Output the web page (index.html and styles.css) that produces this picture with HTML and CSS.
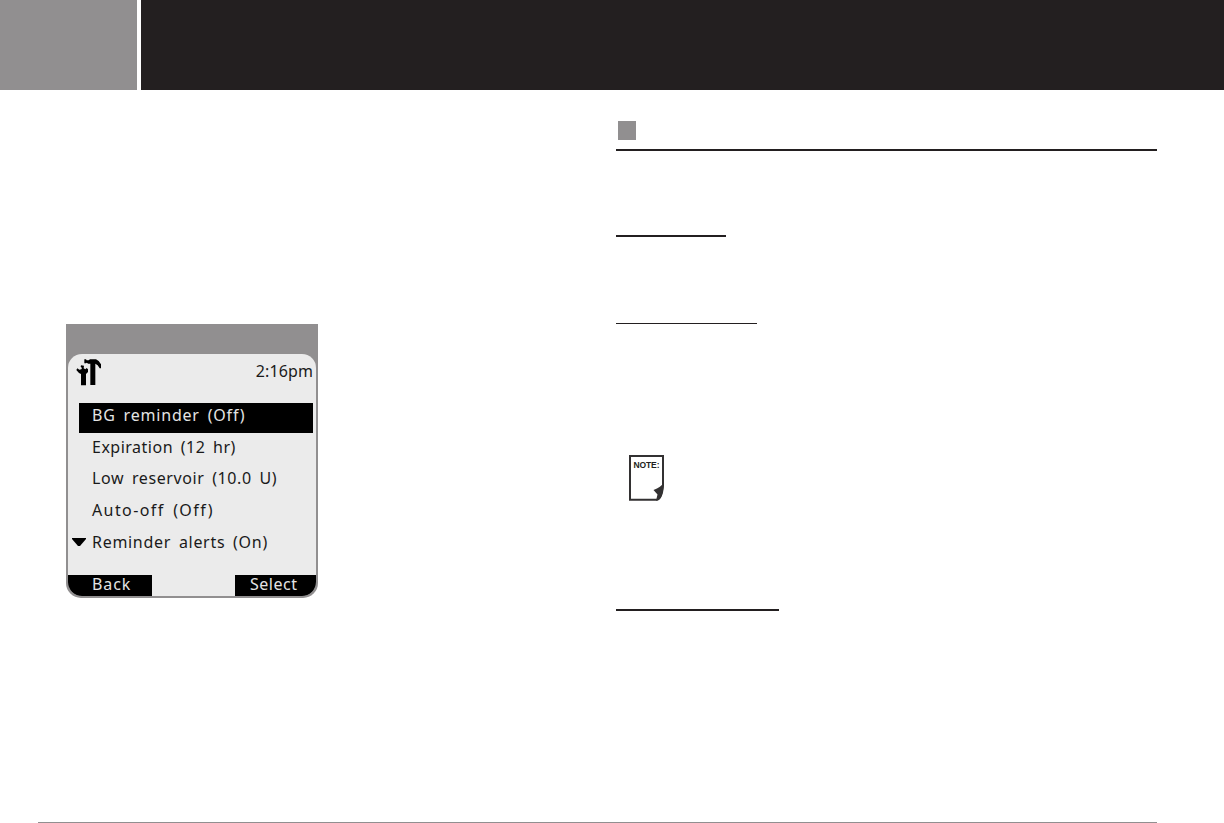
FILE: index.html
```html
<!DOCTYPE html>
<html lang="en">
  <head>
    <meta charset="UTF-8" />
    <meta name="viewport" content="width=device-width, initial-scale=1.0" />
    <title>Reminders</title>
    <link rel="stylesheet" href="styles.css">
  </head>
  <body>
    <header class="banner">
      <div class="banner-tab"></div>
      <div class="banner-title"></div>
    </header>

    <main class="page">
      <section class="left">
        <div class="device">
          <div class="screen">
            <div class="status">
              <svg class="tools" viewBox="48 123 78 81">
                <path d="M73 124h5l2 3h6l4-3h18l8 5 7 10v12h-4l-6-9-7-5v64H91v-64h-6l-5-3-2 2h-5z" />
                <path d="M63 142l9 1-1 8 5 3 4-4 4 4v8l-6 6v34H63v-34l-6-3-8-9 3-5 6 4 6-1 2-4-4-4z" />
              </svg>
              <span class="time">2:16pm</span>
            </div>
            <ul class="menu">
              <li class="selected"><span class="bg">BG reminder (Off)</span></li>
              <li><span class="expiration">Expiration (12 hr)</span></li>
              <li><span class="reservoir">Low reservoir (10.0 U)</span></li>
              <li><span class="auto">Auto-off (Off)</span></li>
              <li>
                <svg class="more" viewBox="0 0 14 8"><path d="M0 0h14v1L8 8H6L0 1z" /></svg>
                <span class="alerts">Reminder alerts (On)</span>
              </li>
            </ul>
            <div class="softkeys">
              <div class="key back">Back</div>
              <div class="key select">Select</div>
            </div>
          </div>
        </div>
      </section>

      <section class="right">
        <div class="heading"><div class="square"></div></div>
        <div class="rule first"></div>
        <div class="rule second"></div>
        <svg class="note" viewBox="0 0 36 46">
          <path class="sheet" d="M1 1H34V30Q33 44 28 44.7H1Z" />
          <path class="fold" d="M35 27.5Q34 45.5 27 45.7L28.5 39.5L24.5 35Q32 32 35 27.5Z" />
          <text x="4.5" y="12.7" textLength="26">NOTE:</text>
        </svg>
        <div class="rule third"></div>
      </section>
    </main>

    <footer></footer>
  </body>
</html>
```

FILE: styles.css
```css
* {
  box-sizing: border-box;
}
body {
  margin: 0;
  height: 823px;
  display: flex;
  flex-direction: column;
  overflow: hidden;
  background: #fff;
  font-family: "Noto Sans", sans-serif;
}
.banner {
  display: flex;
  gap: 4px;
  height: 90px;
}
.banner-tab {
  width: 137px;
  background: #918f90;
}
.banner-title {
  flex: 1;
  background: #231f20;
}
.page {
  flex: 1;
  display: grid;
  grid-template-columns: 550px 541px;
  padding-left: 66px;
}
.left {
  padding-top: 234px;
}
.device {
  width: 252px;
  height: 274px;
  padding: 30px 2px 2px;
  background: #918f90;
  border-radius: 0 0 15px 15px;
}
.screen {
  display: flex;
  flex-direction: column;
  height: 242px;
  background: #ebebeb;
  border-radius: 14px;
  overflow: hidden;
  font-size: 16px;
  color: #1a1a1a;
}
.status {
  display: flex;
  justify-content: space-between;
  height: 49px;
  padding: 5px 3px 0 8px;
}
.tools {
  width: 26px;
  height: 27px;
  fill: #000;
}
.time {
  line-height: 25px;
  letter-spacing: 0.1px;
}
.menu {
  list-style: none;
  margin: 0;
  padding: 0 3px 0 11px;
}
.menu li {
  position: relative;
  height: 31.7px;
  padding-left: 13px;
  line-height: 24px;
  white-space: nowrap;
}
.menu .selected {
  height: 30px;
  margin-bottom: 1.7px;
  background: #000;
  color: #e4e4e4;
}
.menu span {
  word-spacing: 3px;
}
.bg {
  letter-spacing: 0.8px;
}
.expiration {
  letter-spacing: 0.5px;
}
.reservoir {
  letter-spacing: 0.6px;
}
.auto {
  letter-spacing: 1.4px;
}
.alerts {
  letter-spacing: 0.7px;
}
.more {
  position: absolute;
  left: -7px;
  top: 8px;
  width: 14px;
  height: 8px;
}
.softkeys {
  display: flex;
  justify-content: space-between;
  margin-top: auto;
  color: #e4e4e4;
}
.key {
  height: 21px;
  line-height: 18px;
  background: #000;
}
.back {
  width: 84px;
  padding-left: 24px;
  letter-spacing: 0.9px;
}
.select {
  width: 81px;
  padding-left: 15px;
  letter-spacing: 0.5px;
}
.heading {
  height: 61px;
  padding: 31px 0 0 2px;
  border-bottom: 2px solid #231f20;
}
.square {
  width: 18px;
  height: 19px;
  background: #918f90;
}
.rule {
  height: 2px;
  background: #231f20;
}
.first {
  width: 110px;
  margin-top: 84px;
}
.second {
  width: 141px;
  height: 1px;
  margin-top: 86px;
}
.third {
  width: 163px;
  margin-top: 108px;
}
.note {
  display: block;
  width: 36px;
  height: 46px;
  margin: 131px 0 0 13px;
}
.sheet {
  fill: #fff;
  stroke: #333132;
  stroke-width: 2;
}
.fold {
  fill: #333132;
}
.note text {
  font: bold 8.5px "Liberation Sans", sans-serif;
  fill: #231f20;
}
footer {
  width: 1119px;
  height: 1px;
  margin-left: 38px;
  background: #918f90;
}
```
